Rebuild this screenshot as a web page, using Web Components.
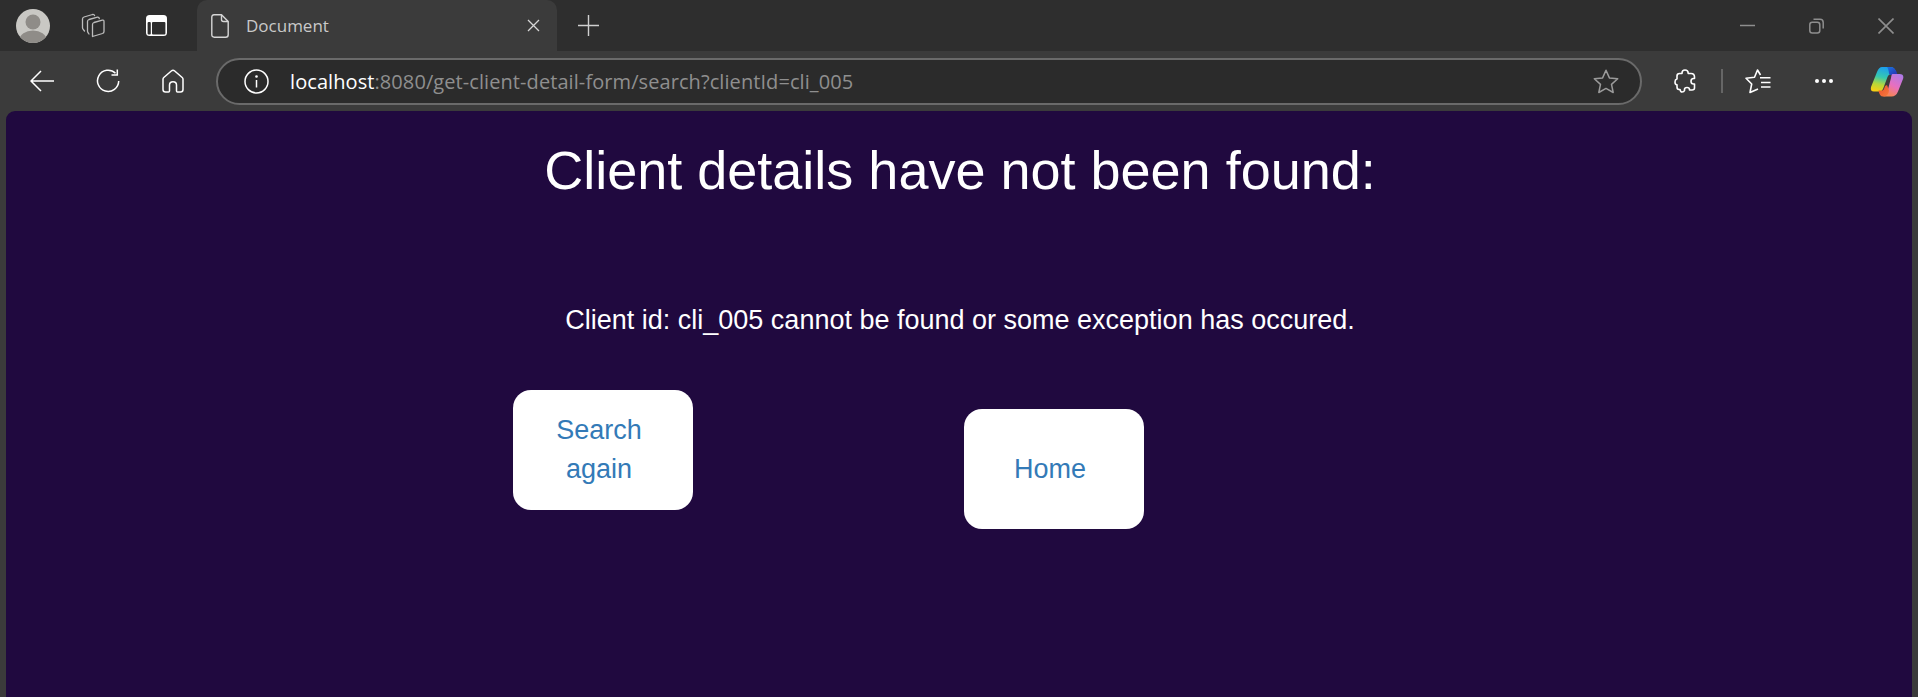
<!DOCTYPE html>
<html>
<head>
<meta charset="utf-8">
<title>Document</title>
<style>
  html, body { margin: 0; height: 100%; background: #3b3b3b; overflow: hidden; }
</style>
</head>
<body>
<browser-window>
  <tab-strip title-text="Document"></tab-strip>
  <nav-toolbar host-name="localhost" url-rest=":8080/get-client-detail-form/search?clientId=cli_005"></nav-toolbar>
  <page-view>
    <h1 slot="heading">Client details have not been found:</h1>
    <p slot="message">Client id: cli_005 cannot be found or some exception has occured.</p>
    <action-link slot="actions">Search again</action-link>
    <action-link slot="actions">Home</action-link>
  </page-view>
</browser-window>

<script>
// Outer frame: chrome on top, page below
class BrowserWindow extends HTMLElement {
  constructor() {
    super();
    this.attachShadow({ mode: 'open' });
    this.shadowRoot.innerHTML = `
      <style>
        :host { display: flex; flex-direction: column; height: 697px; background: #3b3b3b; }
      </style>
      <slot></slot>
    `;
  }
}

// Top row: profile, workspaces, vertical tabs, the tab, new tab, window controls
class TabStrip extends HTMLElement {
  constructor() {
    super();
    this.attachShadow({ mode: 'open' });
  }

  connectedCallback() {
    const title = this.getAttribute('title-text') || '';
    this.shadowRoot.innerHTML = `
      <style>
        :host { display: flex; align-items: stretch; height: 51px; background: #2e2e2e; flex: none; }
        svg { display: block; flex: none; }
        .left { display: flex; align-items: center; padding-left: 16px; width: 197px; box-sizing: border-box; flex: none; }
        .workspaces { margin-left: 31px; }
        .vertical { margin-left: 41px; }
        .tab {
          display: flex; align-items: center; width: 360px; height: 51px; box-sizing: border-box;
          padding-left: 14px; background: #3b3b3b; border-radius: 10px 10px 0 0;
        }
        .tab span {
          margin-left: 17px; flex: 1; color: #c9c9c9;
          font: 17px "Open Sans", sans-serif;
        }
        .close-tab { margin-right: 17px; }
        .plus { margin-left: 21px; align-self: center; }
        .controls { margin-left: auto; display: flex; align-items: center; gap: 54px; padding-right: 24px; }
      </style>
      <div class="left">
        <svg width="34" height="34" viewBox="0 0 34 34">
          <defs><clipPath id="a"><circle cx="17" cy="17" r="17"/></clipPath></defs>
          <g clip-path="url(#a)">
            <rect width="34" height="34" fill="#c9c8c4"/>
            <circle cx="17" cy="13" r="7.5" fill="#8f8c88"/>
            <ellipse cx="17" cy="31" rx="13.5" ry="9.5" fill="#8f8c88"/>
          </g>
        </svg>
        <svg class="workspaces" width="24" height="26" viewBox="0 0 24 26" fill="none" stroke="#bdbdbd" stroke-width="1.3" stroke-linejoin="round" stroke-linecap="round">
          <path d="M11.5 23.5 21.5 20.5Q23 20 23 18.5V8.5Q23 6.8 21.3 7.2L13 9.5Q11.5 10 11.5 11.5V22Q11.5 24 11.5 23.5Z"/>
          <path d="M8 21 7.3 20Q6.5 19 6.5 18V8.5Q6.5 7 8 6.5L16.5 4.2Q18 4 18.3 5.5"/>
          <path d="M3.5 18 2.2 16.4Q1.5 15.5 1.5 14.5V6Q1.5 4.5 3 4L11.5 1.5Q13.2 1.2 13.6 2.6"/>
        </svg>
        <svg class="vertical" width="21" height="21" viewBox="0 0 21 21">
          <rect x="0" y="0" width="21" height="21" rx="3.5" fill="#fff"/>
          <rect x="6" y="7" width="13.4" height="12.4" rx="1" fill="#2e2e2e"/>
          <rect x="1.6" y="7" width="3.2" height="12.4" rx="1" fill="#2e2e2e"/>
        </svg>
      </div>
      <div class="tab">
        <svg width="18" height="24" viewBox="0 0 18 24" fill="none" stroke="#d6d6d6" stroke-width="1.4" stroke-linejoin="round">
          <path d="M3 .8H10.5L17.2 7.5V20.7Q17.2 23.2 14.7 23.2H3.3Q.8 23.2 .8 20.7V3.3Q.8 .8 3 .8Z"/>
          <path d="M10.5 .8V5.5Q10.5 7.5 12.5 7.5H17.2"/>
        </svg>
        <span>${title}</span>
        <svg class="close-tab" width="13" height="13" viewBox="0 0 13 13" stroke="#d6d6d6" stroke-width="1.3">
          <path d="M1 1 12 12M12 1 1 12"/>
        </svg>
      </div>
      <svg class="plus" width="21" height="21" viewBox="0 0 21 21" stroke="#d0d0d0" stroke-width="1.4">
        <path d="M10.5 0V21M0 10.5H21"/>
      </svg>
      <div class="controls">
        <svg width="15" height="15" viewBox="0 0 15 15" stroke="#8e8e8e" stroke-width="1.5"><path d="M0 7.5H15"/></svg>
        <svg width="15" height="16" viewBox="0 0 15 16" fill="none" stroke="#8e8e8e" stroke-width="1.5">
          <rect x=".8" y="4.3" width="10" height="10.7" rx="2.5"/>
          <path d="M4.5 1.3 H11Q14.2 1.3 14.2 4.5V10.5"/>
        </svg>
        <svg width="16" height="16" viewBox="0 0 16 16" stroke="#8e8e8e" stroke-width="1.6"><path d="M.5 .5 15.5 15.5M15.5 .5 .5 15.5"/></svg>
      </div>
    `;
  }
}

// Second row: back, reload, home, address bar and the toolbar icons
class NavToolbar extends HTMLElement {
  constructor() {
    super();
    this.attachShadow({ mode: 'open' });
  }

  connectedCallback() {
    const host = this.getAttribute('host-name') || '';
    const rest = this.getAttribute('url-rest') || '';
    this.shadowRoot.innerHTML = `
      <style>
        :host { display: flex; align-items: center; height: 60px; flex: none; background: #3b3b3b; padding-left: 30px; box-sizing: border-box; }
        svg { display: block; flex: none; }
        .reload { margin-left: 42px; }
        .home { margin-left: 42px; }
        .bar {
          margin-left: 32px; width: 1426px; height: 47px; box-sizing: border-box; margin-top: 1px;
          display: flex; align-items: center; padding-left: 26px;
          background: #2b2b2b; border: 2px solid #6a6a6a; border-radius: 24px;
        }
        .url { margin-left: 21px; font: 20px "Open Sans", sans-serif; letter-spacing: .08px; color: #8f8f8f; white-space: nowrap; }
        .url b { font-weight: 400; color: #fff; }
        .star { margin-left: auto; margin-right: 21px; }
        .ext { margin-left: 32px; }
        .sep { width: 2px; height: 24px; background: #666; margin-left: 25px; flex: none; }
        .fav { margin-left: 22px; }
        .dots { margin-left: 44px; }
        .copilot { margin-left: 37px; }
      </style>
      <svg width="24" height="22" viewBox="0 0 24 22" fill="none" stroke="#fff" stroke-width="1.5" stroke-linejoin="round">
        <path d="M24 11H1.5M11 1 1 11 11 21"/>
      </svg>
      <svg class="reload" width="24" height="24" viewBox="0 0 24 24" fill="none" stroke="#fff" stroke-width="1.5">
        <path d="M19.5 4.2A10.6 10.6 0 1 0 22.7 12"/>
        <path d="M21.3 .5V6H15.5"/>
      </svg>
      <svg class="home" width="22" height="24" viewBox="0 0 22 24" fill="none" stroke="#fff" stroke-width="1.5" stroke-linejoin="round">
        <path d="M9.3 2 1.8 8.5Q1 9.2 1 10.3V20.5Q1 23 3.5 23H6.5Q7.5 23 7.5 22V16Q7.5 12.7 11 12.7T14.5 16V22Q14.5 23 15.5 23H18.5Q21 23 21 20.5V10.3Q21 9.2 20.2 8.5L12.7 2Q11 .6 9.3 2Z"/>
      </svg>
      <div class="bar">
        <svg width="25" height="25" viewBox="0 0 25 25" fill="none" stroke="#fff" stroke-width="1.5">
          <circle cx="12.5" cy="12.5" r="11.5"/>
          <path d="M12.5 11V18.5"/>
          <circle cx="12.5" cy="7.5" r=".6" fill="#fff"/>
        </svg>
        <span class="url"><b>${host}</b>${rest}</span>
        <svg class="star" width="26" height="25" viewBox="0 0 26 25" fill="none" stroke="#9a9a9a" stroke-width="1.5" stroke-linejoin="round">
          <path d="M13 1.3 16.4 8.9 24.7 9.8 18.5 15.4 20.2 23.5 13 19.4 5.8 23.5 7.5 15.4 1.3 9.8 9.6 8.9Z"/>
        </svg>
      </div>
      <svg class="ext" width="22" height="24" viewBox="0 0 22 24" fill="none" stroke="#fff" stroke-width="1.6" stroke-linejoin="round">
        <path d="M8 4.500V4Q8 1 11 1T14.200 4V4.500H17Q20.500 4.500 20.500 8V9.500H19.500Q17 9.500 17 12.200T19.500 15H20.500V19Q20.500 21 18 21H15.500V20.500Q15.500 18.500 13 18.500T10.500 20.500V21.500Q10 23 8 23 6.500 23 6 20.500H5Q3 20.500 3 18V15.800H2.800Q1 15.500 1 13T2.800 10H3V7Q3 4.500 5.500 4.500Z"/>
      </svg>
      <div class="sep"></div>
      <svg class="fav" width="26" height="25" viewBox="0 0 26 25" fill="none" stroke="#fff" stroke-width="1.600" stroke-linejoin="round">
        <path d="M15.500 6 12.500 1 9.500 8.200 1 9.200 6.700 15 5 23.500 13 20"/>
        <path d="M15 8.800H25.500M16 13.500H25.500M16 18H25.500"/>
      </svg>
      <svg class="dots" width="18" height="4" viewBox="0 0 18 4" fill="#fff">
        <circle cx="2" cy="2" r="2"/><circle cx="9" cy="2" r="2"/><circle cx="16" cy="2" r="2"/>
      </svg>
      <svg class="copilot" width="34" height="31" viewBox="0 0 34 31">
        <defs>
          <linearGradient id="l" x1=".55" y1="0" x2=".3" y2="1">
            <stop offset="0" stop-color="#1b9df0"/><stop offset=".42" stop-color="#36c8b0"/><stop offset=".72" stop-color="#b6d83a"/><stop offset="1" stop-color="#f7cf14"/>
          </linearGradient>
          <linearGradient id="r" x1=".85" y1="0" x2=".35" y2="1">
            <stop offset="0" stop-color="#ad7be9"/><stop offset=".55" stop-color="#e86fbf"/><stop offset="1" stop-color="#f8864f"/>
          </linearGradient>
          <linearGradient id="t" x1="0" y1="0" x2="1" y2="1">
            <stop offset="0" stop-color="#1875e0"/><stop offset="1" stop-color="#2a2db0"/>
          </linearGradient>
          <linearGradient id="b" x1="0" y1="0" x2="1" y2="1">
            <stop offset="0" stop-color="#e8502e"/><stop offset="1" stop-color="#f67a3c"/>
          </linearGradient>
        </defs>
        <path d="M12 1H21Q25 1 26.500 8H22Q18.500 8 17.500 11L13 23Q12 25.500 9 25.500H4Q0 25.500 1 21L7 6Q9 1 12 1Z" fill="url(#l)"/>
        <path d="M17 1H21Q25.500 1 27.500 9H21.500Q19.500 9 19 7.500Q18.500 2.500 17 1Z" fill="url(#t)"/>
        <path d="M22.500 8H29.500Q34.500 8 33 13L28 25.500Q26 30.500 21.500 30.500H13Q16 29.500 17 27L21 12Q21.500 8 22.500 8Z" fill="url(#r)"/>
        <path d="M8.500 24.500H12.500Q14 24 15 20L17 19 19 24.500Q18.500 30.500 13 30.500 9.500 30.500 8.500 24.500Z" fill="url(#b)"/>
      </svg>
    `;
  }
}

// Rounded page area with the web page's own content
class PageView extends HTMLElement {
  constructor() {
    super();
    this.attachShadow({ mode: 'open' });
    this.shadowRoot.innerHTML = `
      <style>
        :host {
          display: block; flex: 1; margin: 0 6px; background: #20093f; border-radius: 9px 9px 0 0;
          color: #fff; font-family: "Liberation Sans", Arial, sans-serif; text-align: center;
        }
        ::slotted(h1) { margin: 0; padding: 28px 0 0 2px; font-size: 54px; line-height: 62px; font-weight: 400; }
        ::slotted(p) { margin: 0; padding: 104px 0 0 2px; font-size: 27px; line-height: 31px; }
        .actions {
          display: flex; align-items: last baseline; gap: 271px;
          padding: 53.75px 0 0 507px;
        }
      </style>
      <slot name="heading"></slot>
      <slot name="message"></slot>
      <div class="actions"><slot name="actions"></slot></div>
    `;
  }
}

// White rounded link tile, label centred on its height
class ActionLink extends HTMLElement {
  constructor() {
    super();
    this.attachShadow({ mode: 'open' });
    this.shadowRoot.innerHTML = `
      <style>
        :host {
          display: flex; align-items: center; width: 180px; height: 120px; box-sizing: border-box;
          padding: 0 48px 0 40px; background: #fff; border-radius: 18px;
          color: #337ab7; font-size: 27px; line-height: 39px; text-align: center;
        }
        .label { width: 100%; }
      </style>
      <div class="label"><slot></slot></div>
    `;
  }
}

customElements.define('browser-window', BrowserWindow);
customElements.define('tab-strip', TabStrip);
customElements.define('nav-toolbar', NavToolbar);
customElements.define('page-view', PageView);
customElements.define('action-link', ActionLink);
</script>
</body>
</html>
